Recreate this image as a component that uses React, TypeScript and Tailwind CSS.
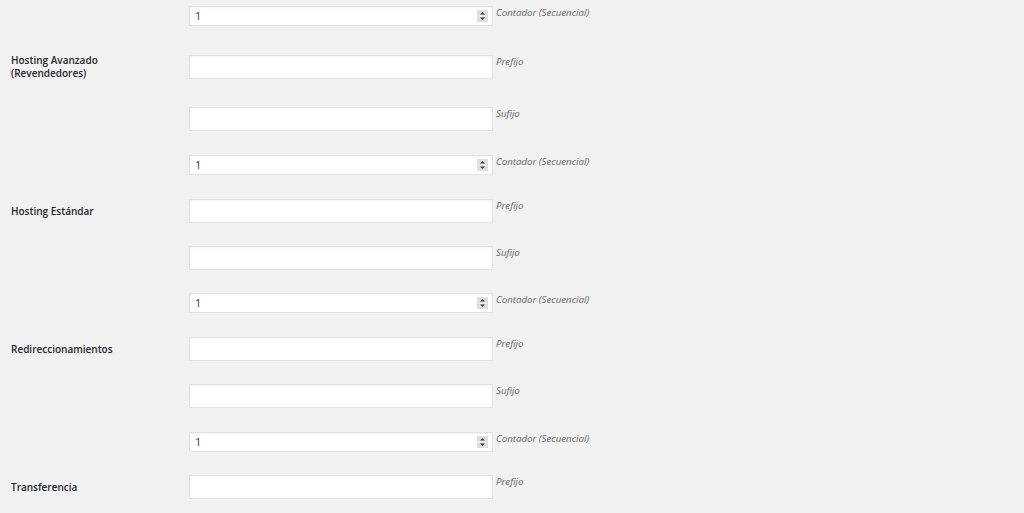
import React from "react";

type Row = {
  kind: "number" | "text";
  mt: number;
  label?: string[];
  desc: string;
};

const rows: Row[] = [
  { kind: "number", mt: 6, desc: "Contador (Secuencial)" },
  { kind: "text", mt: 29, label: ["Hosting Avanzado", "(Revendedores)"], desc: "Prefijo" },
  { kind: "text", mt: 28, desc: "Sufijo" },
  { kind: "number", mt: 24, desc: "Contador (Secuencial)" },
  { kind: "text", mt: 24, label: ["Hosting Estándar"], desc: "Prefijo" },
  { kind: "text", mt: 23, desc: "Sufijo" },
  { kind: "number", mt: 23, desc: "Contador (Secuencial)" },
  { kind: "text", mt: 24, label: ["Redireccionamientos"], desc: "Prefijo" },
  { kind: "text", mt: 23, desc: "Sufijo" },
  { kind: "number", mt: 24, desc: "Contador (Secuencial)" },
  { kind: "text", mt: 23, label: ["Transferencia"], desc: "Prefijo" },
];

function Spinner() {
  return (
    <svg width="11" height="12" viewBox="0 0 11 12" className="block">
      <rect x="0" y="0" width="11" height="12" fill="#dedede" />
      <line x1="1" y1="6" x2="10" y2="6" stroke="#f2f2f2" strokeWidth="1" />
      <path d="M3 4.5 L5.5 2 L8 4.5 Z" fill="#3c3c3c" />
      <path d="M3 7.5 L5.5 10 L8 7.5 Z" fill="#3c3c3c" />
    </svg>
  );
}

export default function App() {
  return (
    <div
      className="w-[1024px] h-[513px] overflow-hidden bg-[#f1f1f1] flex flex-col"
      style={{ fontFamily: '"Open Sans", "Noto Sans", sans-serif' }}
    >
      {rows.map((r, i) => {
        const h = r.kind === "number" ? 20 : 24;
        return (
          <div key={i} className="flex items-start shrink-0" style={{ marginTop: r.mt }}>
            <div
              className="w-[189px] pl-[11px] flex flex-col justify-center text-[10px] leading-[13px] font-semibold text-[#23282d]"
              style={{ height: h }}
            >
              {r.label?.map((l, j) => (
                <span key={j} className="whitespace-nowrap">
                  {l}
                </span>
              ))}
            </div>
            <div
              className="w-[304px] bg-white border border-[#e2e2e2] shadow-[inset_0_1px_2px_rgba(0,0,0,0.05)] flex items-center pl-[5px] pr-[4px] text-[11px] text-[#32373c]"
              style={{ height: h }}
            >
              {r.kind === "number" && (
                <>
                  <span className="flex-1">1</span>
                  <Spinner />
                </>
              )}
            </div>
            <span className="ml-[3px] text-[9.7px] leading-[14px] italic text-[#666666] whitespace-nowrap">
              {r.desc}
            </span>
          </div>
        );
      })}
    </div>
  );
}
